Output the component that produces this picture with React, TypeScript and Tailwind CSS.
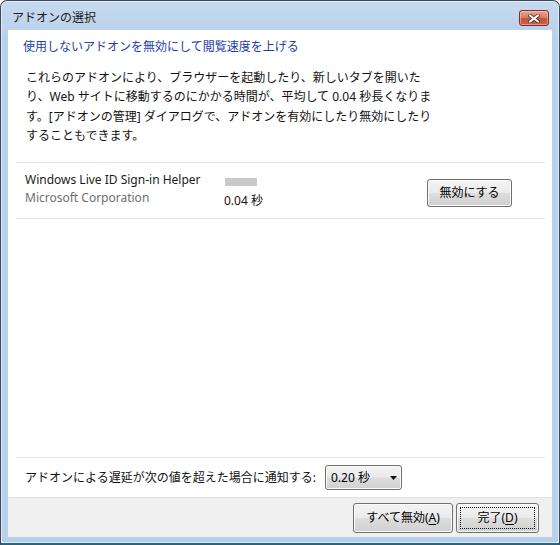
import { ReactNode } from "react";

const font = "font-['Noto_Sans','Noto_Sans_CJK_JP',sans-serif]";

const WinButton = ({ children, className, focused }: { children: ReactNode; className: string; focused?: boolean }) => (
  <div
    className={`relative flex items-center justify-center rounded-[3px] border border-[#707070] bg-[linear-gradient(#f3f3f3,#ebebeb_48%,#dddddd_52%,#d0d0d0)] text-[12px] leading-[16px] text-black shadow-[inset_0_0_0_1px_#fbfbfb] ${className}`}
  >
    {children}
    {focused && <div className="absolute inset-[3px] border border-dotted border-black" />}
  </div>
);

const CloseButton = () => (
  <div className="ml-auto mr-[3px] mt-[9px] flex h-[16px] w-[30px] items-center justify-center rounded-[3px] border border-[#7b3023] bg-[linear-gradient(#e9a595,#d7806b_45%,#c5533a_55%,#c8624a)] shadow-[inset_0_0_0_1px_rgba(255,220,210,0.45)]">
    <svg width="12" height="9" viewBox="0 0 12 9">
      <path d="M2 1.5 L10 7.5 M10 1.5 L2 7.5" stroke="#4a2a26" strokeWidth="3.6" strokeLinecap="square" />
      <path d="M2 1.5 L10 7.5 M10 1.5 L2 7.5" stroke="#ffffff" strokeWidth="2" strokeLinecap="square" />
    </svg>
  </div>
);

export default function App() {
  return (
    <div className={`h-[545px] w-[560px] bg-white ${font}`}>
      <div className="flex h-full flex-col rounded-t-[7px] border border-[#3a4a5e] border-b-2 border-b-[#2f6478] bg-[linear-gradient(#c6daef,#b9d0ea_40px,#b8d0ea)] px-[7px] pb-[6px] shadow-[inset_0_0_0_1px_rgba(255,255,255,0.55)]">
        {/* title bar */}
        <div className="flex h-[29px] items-start">
          <span className="ml-[4px] mt-[9px] text-[12px] leading-[16px] text-[#1b1b1b]">アドオンの選択</span>
          <CloseButton />
        </div>

        {/* client area */}
        <div className="flex flex-1 flex-col">
          <div className="flex h-[467px] flex-col bg-white">
            <div className="pl-[15px] pt-[9px] text-[12px] leading-[16px] text-[#1d3ea9]">
              使用しないアドオンを無効にして閲覧速度を上げる
            </div>
            <p className="mt-[13px] pl-[18px] text-[12px] leading-[19.3px] text-[#111]">
              これらのアドオンにより、ブラウザーを起動したり、新しいタブを開いた
              <br />
              り、Web サイトに移動するのにかかる時間が、平均して 0.04 秒長くなりま
              <br />
              す。[アドオンの管理] ダイアログで、アドオンを有効にしたり無効にしたり
              <br />
              することもできます。
            </p>

            <div className="ml-[8px] mr-[7px] mt-[17px] h-px bg-[#dde5ee]" />
            <div className="flex h-[55px] items-start">
              <div className="w-[216px] pl-[17px] pt-[8px] text-[12px] leading-[18px]">
                <div className="text-[#1b1b1b]">Windows Live ID Sign-in Helper</div>
                <div className="text-[#6e6e6e]">Microsoft Corporation</div>
              </div>
              <div className="w-[203px] pt-[15px]">
                <div className="ml-[1px] h-[8px] w-[32px] bg-[#c9c9c9]" />
                <div className="mt-[7px] text-[12px] leading-[16px] text-[#111]">0.04 秒</div>
              </div>
              <WinButton className="mt-[16px] h-[28px] w-[85px]">無効にする</WinButton>
            </div>
            <div className="ml-[8px] mr-[7px] h-px bg-[#dde5ee]" />

            <div className="flex-1" />

            <div className="ml-[8px] mr-[7px] h-px bg-[#dde5ee]" />
            <div className="grid h-[39px] grid-cols-[300px_77px] items-center pl-[17px]">
              <span className="text-[12px] leading-[16px] text-[#111]">アドオンによる遅延が次の値を超えた場合に通知する:</span>
              <div className="flex h-[25px] items-center justify-between rounded-[3px] border border-[#707070] bg-[linear-gradient(#f3f3f3,#ebebeb_48%,#dddddd_52%,#d0d0d0)] pl-[5px] pr-[4px] text-[12px] leading-[16px] shadow-[inset_0_0_0_1px_#fbfbfb]">
                <span>0.20 秒</span>
                <svg width="7" height="4" viewBox="0 0 7 4">
                  <path d="M0 0 H7 L3.5 4 Z" fill="#111" />
                </svg>
              </div>
            </div>
          </div>

          {/* button strip */}
          <div className="flex flex-1 items-center justify-end gap-[3px] border-t border-[#dfdfdf] bg-[#f0f0f0] pr-[13px]">
            <WinButton className="h-[30px] w-[100px]">
              すべて無効(<span className="underline underline-offset-2">A</span>)
            </WinButton>
            <WinButton className="h-[30px] w-[83px]" focused>
              完了(<span className="underline underline-offset-2">D</span>)
            </WinButton>
          </div>
        </div>
      </div>
    </div>
  );
}
